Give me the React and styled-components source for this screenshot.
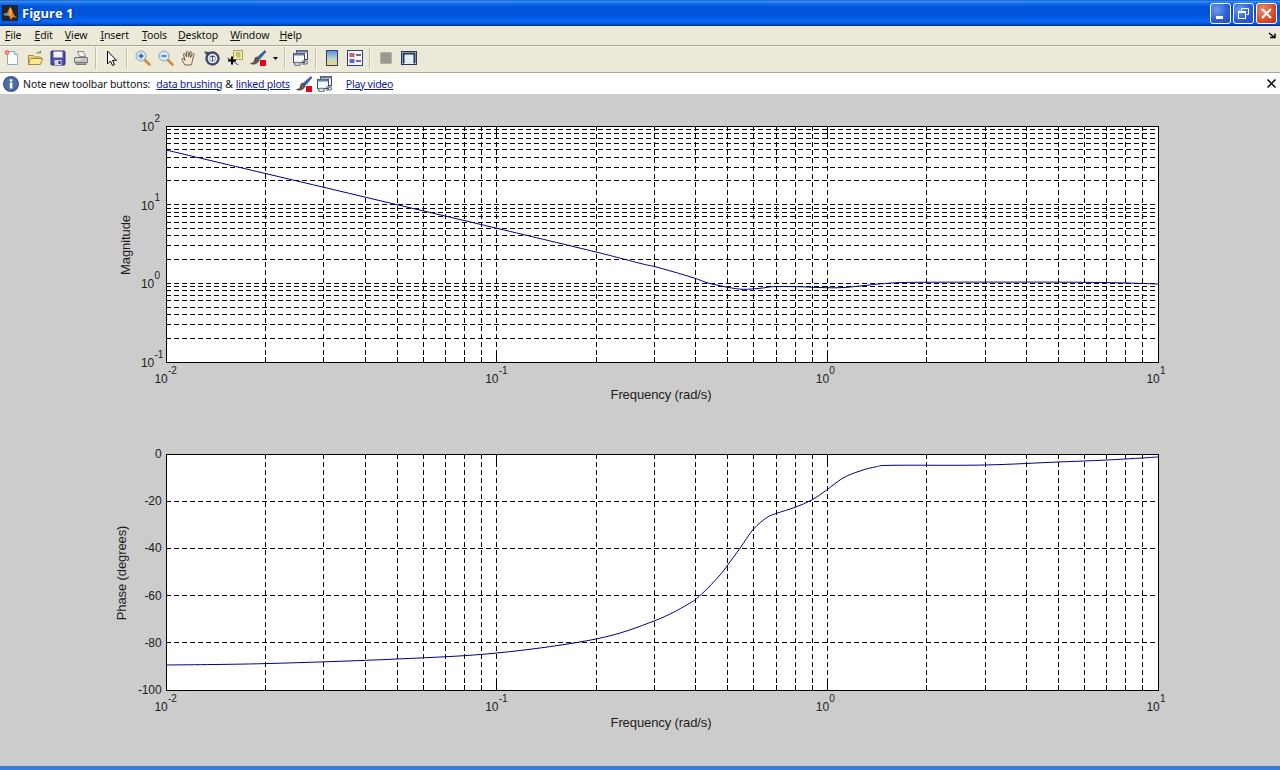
import React from "react";
import styled, { createGlobalStyle } from "styled-components";

const GlobalStyle = createGlobalStyle`
  html, body {
    margin: 0;
    padding: 0;
    height: 100%;
    overflow: hidden;
    background: #cccccc;
  }
  * { box-sizing: border-box; }
`;

const Window = styled.div`
  display: flex;
  flex-direction: column;
  height: 770px;
  width: 1280px;
  font-family: "Noto Sans", "DejaVu Sans", sans-serif;
  font-size: 10.5px;
  letter-spacing: -0.1px;
  color: #111;
`;

const TitleBar = styled.div`
  display: flex;
  align-items: center;
  height: 26px;
  padding: 0 3px 0 2px;
  background: linear-gradient(
    180deg,
    #0a5fd8 0%,
    #3a8cf0 6%,
    #1a72ea 12%,
    #0058dc 24%,
    #0050d8 50%,
    #0058e4 66%,
    #0a68f4 80%,
    #0058dc 90%,
    #0040b0 96%,
    #003092 100%
  );
`;

const AppIcon = styled.svg`
  width: 16px;
  height: 16px;
  flex: none;
`;

const TitleText = styled.span`
  margin-left: 4px;
  flex: 1;
  color: #fff;
  font-family: "Open Sans", "DejaVu Sans", sans-serif;
  font-weight: 700;
  font-size: 13px;
  letter-spacing: 0;
  text-shadow: 1px 1px 0 #0a3aa0;
`;

const CaptionButtons = styled.div`
  display: flex;
  gap: 2px;
`;

const CaptionButton = styled.div`
  width: 21px;
  height: 21px;
  border: 1px solid #fff;
  border-radius: 3px;
  display: flex;
  align-items: center;
  justify-content: center;
  background: ${(p) =>
    p.$close
      ? "radial-gradient(circle at 30% 30%, #ec8a70, #d8502c 55%, #b83010)"
      : "radial-gradient(circle at 30% 30%, #6c9cf0, #2f5fd8 55%, #2348bc)"};
`;

const MenuBar = styled.div`
  display: flex;
  align-items: center;
  height: 20px;
  padding: 0 5px 2px;
  background: #ece9d8;
  border-bottom: 1px solid #aca899;
  position: relative;
`;

const MenuItem = styled.span`
  margin-right: ${(p) => p.$gap}px;
  u { text-underline-offset: 1px; }
`;

const DockArrow = styled.svg`
  position: absolute;
  right: 3px;
  top: 6px;
  width: 9px;
  height: 8px;
`;

const Toolbar = styled.div`
  display: flex;
  align-items: center;
  height: 27px;
  padding-bottom: 3px;
  background: #ece9d8;
  border-top: 1px solid #f6f4ea;
  border-bottom: 1px solid #aca899;
`;

const ToolButton = styled.div`
  width: ${(p) => p.$w || 23}px;
  height: 22px;
  display: flex;
  align-items: center;
  justify-content: center;
  flex: none;
`;

const Separator = styled.div`
  width: 2px;
  height: 22px;
  margin: 0 3px;
  background: #c4c1b2;
  border-right: 1px solid #f8f7f0;
  flex: none;
`;

const Icon = styled.svg`
  width: 16px;
  height: 16px;
  display: block;
  flex: none;
  margin-right: ${(p) => p.$gap || 0}px;
`;

const InfoBar = styled.div`
  display: flex;
  align-items: center;
  height: 21px;
  padding-left: 3px;
  background: #fff;
  position: relative;
`;

const InfoText = styled.span`
  margin-left: 4px;
  margin-right: 6px;
`;

const InfoLink = styled.a`
  color: #0b1a9c;
  text-decoration: underline;
  letter-spacing: -0.25px;
  margin-right: ${(p) => p.$gap || 0}px;
`;

const Amp = styled.span`
  margin: 0 3px;
`;

const CloseInfo = styled.svg`
  position: absolute;
  right: 4px;
  top: 6px;
  width: 9px;
  height: 9px;
`;

const Figure = styled.div`
  flex: 1;
  background: #cccccc;
  display: flex;
  flex-direction: column;
`;

const PlotSvg = styled.svg`
  display: block;
  width: 1280px;
  height: 328px;
  flex: none;
`;

const BottomEdge = styled.div`
  height: 4px;
  background: #3a7cdc;
  flex: none;
`;

const Plot = styled.rect`
  fill: #fff;
`;

const Frame = styled.rect`
  fill: none;
  stroke: #000;
  stroke-width: 1;
  shape-rendering: crispEdges;
`;

const Grid = styled.line`
  stroke: #000;
  stroke-width: 1;
  stroke-dasharray: 5 3;
  shape-rendering: crispEdges;
`;

const Tick = styled.line`
  stroke: #000;
  stroke-width: 1;
  shape-rendering: crispEdges;
`;

const Curve = styled.path`
  fill: none;
  stroke: #00007f;
  stroke-width: 1;
`;

const Label = styled.text`
  font-family: "Liberation Sans", Arial, sans-serif;
  font-size: ${(p) => p.$size || 12}px;
  fill: #1c1c1c;
`;

const X0 = 166;
const X1 = 1158;
const TOP = 32;
const BOTTOM = 268;
const logX = (w) => X0 + ((Math.log10(w) + 2) / 3) * (X1 - X0);
const logYMag = (m) => TOP + ((2 - Math.log10(m)) / 3) * (BOTTOM - TOP);
const linYPhase = (p) => TOP + (-p / 100) * (BOTTOM - TOP);

const minorPositions = (from, to) => {
  const out = [];
  for (let d = from; d < to; d++) {
    for (let k = 2; k <= 9; k++) out.push(k * Math.pow(10, d));
  }
  return out;
};

const smoothPath = (pts) => {
  let d = `M${pts[0][0]} ${pts[0][1]}`;
  for (let i = 0; i < pts.length - 1; i++) {
    const p0 = pts[Math.max(i - 1, 0)];
    const p1 = pts[i];
    const p2 = pts[i + 1];
    const p3 = pts[Math.min(i + 2, pts.length - 1)];
    const c1 = [p1[0] + (p2[0] - p0[0]) / 6, p1[1] + (p2[1] - p0[1]) / 6];
    const c2 = [p2[0] - (p3[0] - p1[0]) / 6, p2[1] - (p3[1] - p1[1]) / 6];
    d += `C${c1[0].toFixed(1)} ${c1[1].toFixed(1)} ${c2[0].toFixed(1)} ${c2[1].toFixed(1)} ${p2[0].toFixed(1)} ${p2[1].toFixed(1)}`;
  }
  return d;
};

// curve points read off the figure, as page x / page y
const magPoints = [
  [166, 150], [265, 173.4], [397, 204.7], [497, 228.3], [596, 252], [640, 263.3], [655, 266.7],
  [673, 271.7], [695, 278.3], [708, 283], [720, 285.7], [730, 287.7], [743, 289.3], [760, 288.3],
  [773, 286.7], [797, 286.7], [813, 287.3], [840, 287.7], [867, 285.3], [883, 283.7], [920, 282.3],
  [1085, 282.3], [1158, 284],
];

const phasePoints = [
  [166, 665], [265, 663.6], [397, 659], [497, 653], [596, 639], [654, 621], [686.7, 605],
  [701.7, 594], [720, 575], [727.7, 565], [740, 548.3], [753.3, 529.3], [766.7, 517.7],
  [776.7, 513.3], [795, 507.3], [811.7, 500], [826.7, 490], [843, 478], [860, 471],
  [876.7, 466.7], [893, 465.3], [985, 465], [1058, 462], [1107, 460], [1158, 457],
];

const DecadeLabel = ({ x, y, exp }) => (
  <>
    <Label x={x} y={y}>10</Label>
    <Label x={x + 13.5} y={y - 9} $size={10}>{exp}</Label>
  </>
);

const XAxis = () => (
  <>
    {["-2", "-1", "0", "1"].map((e, i) => (
      <DecadeLabel key={e} x={logX(Math.pow(10, i - 2)) - 11.5} y={BOTTOM + 21} exp={e} />
    ))}
    <Label x={661} y={BOTTOM + 37} textAnchor="middle" $size={13}>Frequency (rad/s)</Label>
  </>
);

const VerticalGrid = () =>
  [...minorPositions(-2, 1), 0.1, 1].map((w) => {
    const x = Math.floor(logX(w)) + 0.5;
    const len = [0.1, 1].includes(w) ? 10 : 5;
    return (
      <React.Fragment key={w}>
        <Grid x1={x} x2={x} y1={TOP} y2={BOTTOM} />
        <Tick x1={x} x2={x} y1={BOTTOM} y2={BOTTOM - len} />
        <Tick x1={x} x2={x} y1={TOP} y2={TOP + len} />
      </React.Fragment>
    );
  });

const MagnitudePlot = () => {
  const hs = [...minorPositions(-1, 2), 1, 10];
  return (
    <PlotSvg viewBox="0 0 1280 328">
      <Plot x={X0} y={TOP} width={X1 - X0} height={BOTTOM - TOP} />
      <VerticalGrid />
      {hs.map((m) => {
        const y = Math.floor(logYMag(m)) + 0.5;
        return <Grid key={m} x1={X0} x2={X1} y1={y} y2={y} />;
      })}
      <Curve d={smoothPath(magPoints.map(([x, y]) => [x, y - 94]))} />
      <Frame x={X0 + 0.5} y={TOP + 0.5} width={X1 - X0} height={BOTTOM - TOP} />
      {["2", "1", "0", "-1"].map((e, i) => (
        <DecadeLabel key={e} x={141} y={TOP + 5 + (i * (BOTTOM - TOP)) / 3} exp={e} />
      ))}
      <Label transform="translate(130 151) rotate(-90)" textAnchor="middle" $size={13}>Magnitude</Label>
      <XAxis />
    </PlotSvg>
  );
};

const PhasePlot = () => (
  <PlotSvg viewBox="0 0 1280 328">
    <Plot x={X0} y={TOP} width={X1 - X0} height={BOTTOM - TOP} />
    <VerticalGrid />
    {[-20, -40, -60, -80].map((p) => {
      const y = Math.floor(linYPhase(p)) + 0.5;
      return <Grid key={p} x1={X0} x2={X1} y1={y} y2={y} />;
    })}
    <Curve d={smoothPath(phasePoints.map(([x, y]) => [x, y - 422]))} />
    <Frame x={X0 + 0.5} y={TOP + 0.5} width={X1 - X0} height={BOTTOM - TOP} />
    {[0, -20, -40, -60, -80, -100].map((p) => (
      <Label key={p} x={161.5} y={linYPhase(p) + 4} textAnchor="end">{p}</Label>
    ))}
    <Label transform="translate(126 151) rotate(-90)" textAnchor="middle" $size={13}>Phase (degrees)</Label>
    <XAxis />
  </PlotSvg>
);

const NewIcon = () => (
  <Icon viewBox="0 0 16 16">
    <path d="M3.5 1.5h7l3 3v10h-10z" fill="#fdfdfa" stroke="#8fa6c4" />
    <path d="M10.5 1.5v3h3" fill="#dfe8f2" stroke="#8fa6c4" />
    <circle cx="3" cy="2.5" r="2" fill="#f0a080" stroke="#d85a3a" strokeWidth="0.8" />
  </Icon>
);

const OpenIcon = () => (
  <Icon viewBox="0 0 16 16">
    <path d="M1.5 5.5h5l1 1.5h6v7h-12z" fill="#f4d878" stroke="#a88a38" />
    <path d="M1.5 14.5l2-6h12l-2 6z" fill="#fbe898" stroke="#a88a38" />
    <path d="M9 4c1-2 3-2.5 4.5-1.5M13.5 1v2h-2" fill="none" stroke="#5a8a70" />
  </Icon>
);

const SaveIcon = () => (
  <Icon viewBox="0 0 16 16">
    <rect x="1" y="1" width="14" height="14" rx="1" fill="#4a50b0" stroke="#2a2c78" />
    <rect x="3.5" y="1.5" width="9" height="6" fill="#f4f4fa" />
    <rect x="4.5" y="10" width="7" height="5" fill="#d8d8e4" />
    <rect x="8.5" y="11" width="2" height="3" fill="#2a2c78" />
  </Icon>
);

const PrintIcon = () => (
  <Icon viewBox="0 0 16 16">
    <path d="M4.5 1.5h6l2 5h-6z" fill="#f2f2f2" stroke="#8a8a8a" />
    <path d="M1.5 7.5h13v5h-13z" fill="#c4c4c0" stroke="#777" />
    <path d="M3 12.5h10v2H3z" fill="#a4a4a0" stroke="#777" />
    <path d="M2.5 9.5h5" stroke="#f0f0f0" />
  </Icon>
);

const PointerIcon = () => (
  <Icon viewBox="0 0 16 16">
    <path d="M3.5 1v13l3-3 2 4.5 2-1-2-4.2h4z" fill="#fff" stroke="#000" strokeLinejoin="round" />
  </Icon>
);

const ZoomIcon = ({ plus }) => (
  <Icon viewBox="0 0 16 16">
    <path d="M9.5 9.5l5 5" stroke="#d88a30" strokeWidth="2.6" strokeLinecap="round" />
    <circle cx="6" cy="6" r="5" fill="#d4e8f8" stroke="#8aa4b8" />
    <path d={plus ? "M3.5 6h5M6 3.5v5" : "M3.5 6h5"} stroke="#2a5ab0" strokeWidth="1.4" />
  </Icon>
);

const HandIcon = () => (
  <Icon viewBox="0 0 16 16">
    <path
      d="M4 15c-1-2-3-4-3-6 0-1 1.400-1 2 0l1 1.500-1.500-6c-.3-1.300 1.300-1.600 1.700-.4L5.500 7 5.400 2.500c0-1.300 1.700-1.300 1.800 0L7.700 7l1-4.800c.3-1.200 1.800-.9 1.600.3L9.500 7.500l2-3.500c.6-1 2-.3 1.500.7L11.500 10c-.4 2-.5 3.500-1.500 5z"
      fill="#fbe6d4"
      stroke="#5a5048"
      strokeWidth="0.9"
    />
  </Icon>
);

const RotateIcon = () => (
  <Icon viewBox="0 0 16 16">
    <circle cx="8.500" cy="8.500" r="6" fill="#eef0f2" stroke="#3e4a68" strokeWidth="2.400" />
    <path d="M0 1.500l6 .5-3 4z" fill="#3e4a68" />
    <circle cx="8.500" cy="8.500" r="3" fill="none" stroke="#8a96a8" strokeWidth="1" />
    <path d="M6.500 6.500h4M8.500 6.500v4.500" stroke="#3e4a68" strokeWidth="1" />
  </Icon>
);

const CursorIcon = () => (
  <Icon viewBox="0 0 16 16">
    <path d="M6.500 .5h9v9h-9z" fill="#fbf2a8" stroke="#a8a060" />
    <path d="M8.500 3h5M8.500 5h5M9.500 7h4" stroke="#8a8a50" />
    <path d="M.5 8c3 1 6 4 11 7" fill="none" stroke="#5a3aa0" />
    <path d="M5 6.500v8M1 10.500h8" stroke="#000" strokeWidth="2" />
  </Icon>
);

const BrushIcon = ({ gap }) => (
  <Icon viewBox="0 0 16 16" $gap={gap}>
    <path d="M15 .5L7.500 7l2 2.300L15.700 2z" fill="#3a62c0" stroke="#28407c" strokeWidth="0.7" />
    <path d="M7 7c-2.500 0-2.500 3-3 4.500-.3 1-2 1.500-3.500 2 3 1.500 7 .5 8.500-3 .3-1-.5-2.500-2-3.500z" fill="#5c5c54" stroke="#3a3a34" strokeWidth="0.6" />
    <rect x="10" y="10" width="6" height="6" fill="#e4001c" />
  </Icon>
);

const LinkIcon = ({ gap }) => (
  <Icon viewBox="0 0 16 16" $gap={gap}>
    <rect x="3.500" y=".5" width="11" height="9" fill="#f2f4f8" stroke="#3a4a68" />
    <rect x="3.500" y=".5" width="11" height="2" fill="#6a7c9c" />
    <rect x=".5" y="3.500" width="11" height="9" fill="#f8f9fc" stroke="#3a4a68" />
    <rect x=".5" y="3.500" width="11" height="2" fill="#6a7c9c" />
    <path d="M3 12.500h3.500a2 2 0 010 3H3a1.500 1.500 0 010-3zM9 11h4a1.500 1.500 0 010 3H9" fill="none" stroke="#7a8698" strokeWidth="1.400" />
  </Icon>
);

const ColorbarIcon = () => (
  <Icon viewBox="0 0 16 16">
    <defs>
      <linearGradient id="cbar" x1="0" y1="0" x2="0" y2="1">
        <stop offset="0" stopColor="#5a8ae8" />
        <stop offset="0.55" stopColor="#b8d8c8" />
        <stop offset="1" stopColor="#f8d860" />
      </linearGradient>
    </defs>
    <rect x="2.500" y=".5" width="11" height="15" fill="url(#cbar)" stroke="#34406c" />
  </Icon>
);

const LegendIcon = () => (
  <Icon viewBox="0 0 16 16">
    <rect x=".5" y=".5" width="15" height="15" fill="#f6f6f6" stroke="#34406c" />
    <rect x="2.500" y="3" width="5" height="4" fill="#d85a70" />
    <rect x="2.500" y="9" width="5" height="4" fill="#5a6ae0" />
    <path d="M9 5h5M9 11h5" stroke="#34406c" strokeWidth="1.400" />
  </Icon>
);

const SquareIcon = () => (
  <Icon viewBox="0 0 16 16">
    <rect x="2.500" y="2.500" width="11" height="11" rx="1" fill="#9a9a94" stroke="#b0aea4" />
  </Icon>
);

const FrameIcon = () => (
  <Icon viewBox="0 0 16 16">
    <rect x=".5" y="1.500" width="15" height="13" fill="#e4eef8" stroke="#24385c" />
    <path d="M1.500 2.500h13v2h-13zM1.500 2.500h2v11h-2zM12.500 2.500h2v11h-2z" fill="#24385c" />
  </Icon>
);

const ToolbarRow = () => (
  <Toolbar>
    <ToolButton><NewIcon /></ToolButton>
    <ToolButton><OpenIcon /></ToolButton>
    <ToolButton><SaveIcon /></ToolButton>
    <ToolButton><PrintIcon /></ToolButton>
    <Separator />
    <ToolButton><PointerIcon /></ToolButton>
    <Separator />
    <ToolButton><ZoomIcon plus /></ToolButton>
    <ToolButton><ZoomIcon /></ToolButton>
    <ToolButton><HandIcon /></ToolButton>
    <ToolButton><RotateIcon /></ToolButton>
    <ToolButton><CursorIcon /></ToolButton>
    <ToolButton><BrushIcon /></ToolButton>
    <ToolButton $w={12}>
      <svg width="5" height="3" viewBox="0 0 5 3"><path d="M0 0h5L2.500 3z" fill="#000" /></svg>
    </ToolButton>
    <Separator />
    <ToolButton><LinkIcon /></ToolButton>
    <Separator />
    <ToolButton><ColorbarIcon /></ToolButton>
    <ToolButton><LegendIcon /></ToolButton>
    <Separator />
    <ToolButton><SquareIcon /></ToolButton>
    <ToolButton><FrameIcon /></ToolButton>
  </Toolbar>
);

const menus = [
  ["F", "ile", 13],
  ["E", "dit", 12],
  ["V", "iew", 13],
  ["I", "nsert", 13],
  ["T", "ools", 11],
  ["D", "esktop", 12],
  ["W", "indow", 10],
  ["H", "elp", 0],
];

export default function App() {
  return (
    <>
      <GlobalStyle />
      <Window>
        <TitleBar>
          <AppIcon viewBox="0 0 16 16">
            <rect width="16" height="16" fill="#20242c" />
            <path d="M1 9l4-1 3-6 2 3 2 5 3 3-4-1-2 3-2-4z" fill="#e8801c" />
            <path d="M1 9l4-1 2 2-3 1z" fill="#48a0a8" />
            <path d="M8 2l2 3-1 6-2-1z" fill="#f8b040" />
          </AppIcon>
          <TitleText>Figure 1</TitleText>
          <CaptionButtons>
            <CaptionButton>
              <svg width="13" height="13" viewBox="0 0 13 13"><rect x="2" y="9" width="7" height="3" fill="#fff" /></svg>
            </CaptionButton>
            <CaptionButton>
              <svg width="13" height="13" viewBox="0 0 13 13" fill="none" stroke="#fff">
                <path d="M4.500 3.500V1.500h7v6h-2" />
                <rect x="1.500" y="4.500" width="7" height="7" />
                <path d="M1.500 5h7" strokeWidth="2" />
              </svg>
            </CaptionButton>
            <CaptionButton $close>
              <svg width="13" height="13" viewBox="0 0 13 13"><path d="M2 2l9 9M11 2l-9 9" stroke="#fff" strokeWidth="2" /></svg>
            </CaptionButton>
          </CaptionButtons>
        </TitleBar>
        <MenuBar>
          {menus.map(([k, rest, gap]) => (
            <MenuItem key={k} $gap={gap}><u>{k}</u>{rest}</MenuItem>
          ))}
          <DockArrow viewBox="0 0 9 8">
            <path d="M1 1l5 4M2 5.500h5V1.500" fill="none" stroke="#000" strokeWidth="1.500" />
          </DockArrow>
        </MenuBar>
        <ToolbarRow />
        <InfoBar>
          <Icon viewBox="0 0 16 16">
            <circle cx="8" cy="8" r="8" fill="#3a5a90" />
            <circle cx="8" cy="8" r="6.500" fill="#4a6ea8" />
            <rect x="6.800" y="6.500" width="2.600" height="6" fill="#fff" />
            <rect x="6.800" y="3.300" width="2.600" height="2.200" fill="#fff" />
          </Icon>
          <InfoText>Note new toolbar buttons:</InfoText>
          <InfoLink href="#">data brushing</InfoLink>
          <Amp>&amp;</Amp>
          <InfoLink href="#" $gap={6}>linked plots</InfoLink>
          <BrushIcon gap={5} />
          <LinkIcon gap={13} />
          <InfoLink href="#">Play video</InfoLink>
          <CloseInfo viewBox="0 0 9 9">
            <path d="M.5.5l8 8M8.500.5l-8 8" stroke="#000" strokeWidth="1.500" />
          </CloseInfo>
        </InfoBar>
        <Figure>
          <MagnitudePlot />
          <PhasePlot />
        </Figure>
        <BottomEdge />
      </Window>
    </>
  );
}
